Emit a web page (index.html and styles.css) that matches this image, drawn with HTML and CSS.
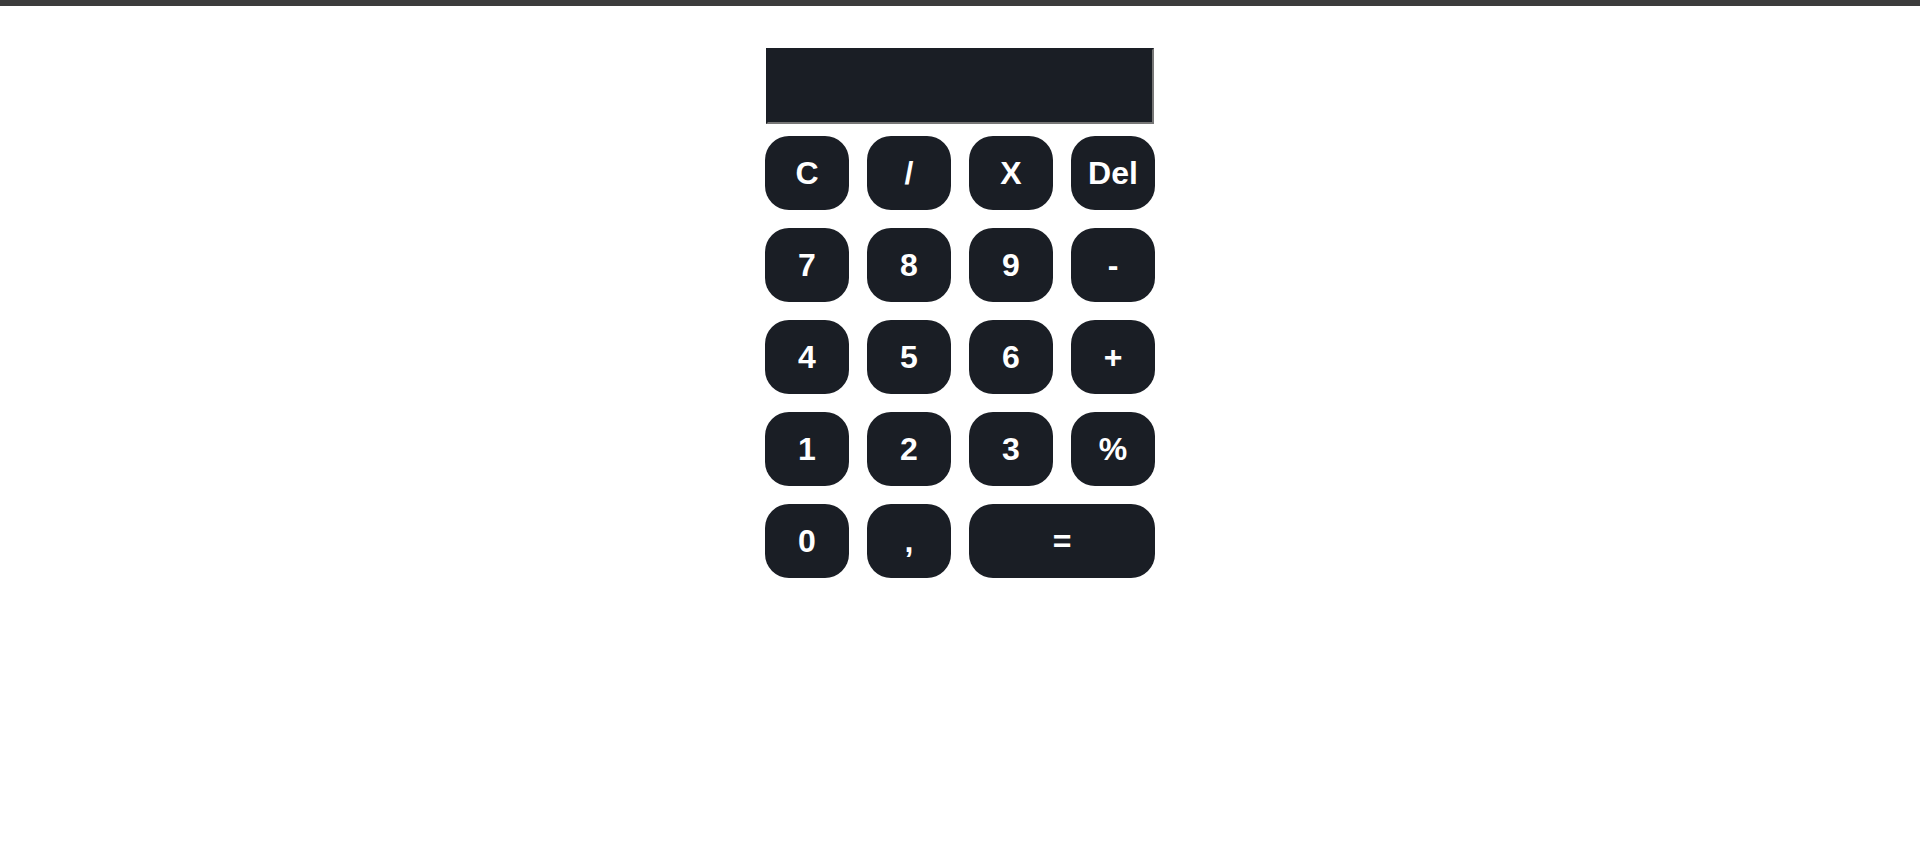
FILE: index.html
```html
<!DOCTYPE html>
<html lang="en">
<head>
<meta charset="utf-8">
<title>Calculator</title>
<link rel="stylesheet" href="styles.css">
</head>
<body>
<div class="topbar"></div>
<main class="calc">
  <input class="display" type="text" value="" readonly>
  <div class="keys">
    <button class="key">C</button>
    <button class="key">/</button>
    <button class="key">X</button>
    <button class="key">Del</button>
    <button class="key">7</button>
    <button class="key">8</button>
    <button class="key">9</button>
    <button class="key">-</button>
    <button class="key">4</button>
    <button class="key">5</button>
    <button class="key">6</button>
    <button class="key">+</button>
    <button class="key">1</button>
    <button class="key">2</button>
    <button class="key">3</button>
    <button class="key">%</button>
    <button class="key">0</button>
    <button class="key">,</button>
    <button class="key key-wide">=</button>
  </div>
</main>
</body>
</html>
```
FILE: styles.css
```css
html, body {
  margin: 0;
  padding: 0;
  background: #ffffff;
  font-family: "Liberation Sans", Arial, sans-serif;
}
.topbar {
  height: 6px;
  background: #3c3c3c;
}
.calc {
  width: 390px;
  margin: 42px auto 0;
  display: flex;
  flex-direction: column;
  gap: 12px;
}
.display {
  box-sizing: border-box;
  width: 388px;
  margin-left: 1px;
  height: 76px;
  background: #1a1e25;
  border-style: solid;
  border-width: 2px;
  border-color: #1a1e25 #777777 #777777 #1a1e25;
  padding: 0 10px;
  color: #ffffff;
  font-family: "Liberation Sans", Arial, sans-serif;
  font-size: 32px;
  outline: none;
}
.keys {
  display: grid;
  grid-template-columns: repeat(4, 84px);
  grid-auto-rows: 74px;
  gap: 18px;
}
.key {
  background: #1a1e25;
  color: #ffffff;
  border: none;
  border-radius: 24px;
  font-family: "Liberation Sans", Arial, sans-serif;
  font-weight: bold;
  font-size: 32px;
  padding: 0;
  cursor: pointer;
}
.key-wide {
  grid-column: span 2;
}
```
